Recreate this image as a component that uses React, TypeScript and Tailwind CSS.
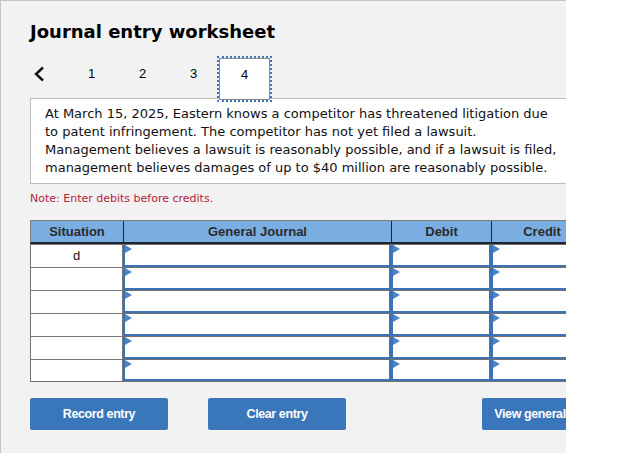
import React from "react";

const FONT_V = { fontFamily: '"DejaVu Sans", Verdana, sans-serif' };
const FONT_A = { fontFamily: '"Liberation Sans", Arial, sans-serif' };

function Tri() {
  return (
    <svg className="absolute left-0 top-0" width="7" height="8" viewBox="0 0 7 8">
      <polygon points="0,0 7,4 0,8" fill="#4a86c8" />
    </svg>
  );
}

function InputCell({ w }: { w: string }) {
  return (
    <div className={`${w} h-full border-t border-[#6f6f6f]`}>
      <div className="relative h-full border-2 border-t-0 border-[#3d73b5] bg-white">
        <Tri />
      </div>
    </div>
  );
}

export default function App() {
  const rows = ["d", "", "", "", "", ""];
  return (
    <div className="w-[640px] h-[456px] bg-white overflow-hidden">
      <div
        className="w-[566px] h-[453px] bg-[#f2f2f2] border-t border-l border-[#c4c4c4] overflow-hidden pt-[19px] pl-[29px]"
        style={FONT_V}
      >
        <div className="text-[18px] leading-[24px] font-bold text-black">Journal entry worksheet</div>

        <div className="relative z-10 mt-[14px] flex h-[40px] items-start">
          <div className="w-[36px] pt-[8px] pl-[3px]">
            <svg width="12" height="16" viewBox="0 0 12 16" className="block">
              <polyline points="10,1.5 3,8 10,14.5" fill="none" stroke="#111" strokeWidth="2.4" />
            </svg>
          </div>
          {["1", "2", "3"].map((n) => (
            <div key={n} className="w-[51px] pt-[8px] text-center text-[13px] leading-[15px] text-black" style={FONT_A}>
              {n}
            </div>
          ))}
          <div
            className="w-[51px] h-[42px] shrink-0 pt-[8px] text-center bg-white border border-[#8a8a8a] outline-2 outline-dotted outline-[#3a76c4] text-[13px] leading-[15px] text-black"
            style={FONT_A}
          >
            4
          </div>
        </div>

        <div className="w-[560px] border border-[#bdbdbd] bg-white pl-[14px] pt-[6px] pb-[6px] text-[13px] leading-[18px] text-[#111]">
          <div className="whitespace-nowrap">At March 15, 2025, Eastern knows a competitor has threatened litigation due</div>
          <div className="whitespace-nowrap">to patent infringement. The competitor has not yet filed a lawsuit.</div>
          <div className="whitespace-nowrap">Management believes a lawsuit is reasonably possible, and if a lawsuit is filed,</div>
          <div className="whitespace-nowrap">management believes damages of up to $40 million are reasonably possible.</div>
        </div>

        <div className="mt-[8px] text-[11px] leading-[14px] text-[#b4233c]">Note: Enter debits before credits.</div>

        <div className="mt-[14px] w-[562px]" style={FONT_A}>
          <div className="flex h-[24px] bg-[#7aade2] border-t border-l border-[#7d7d7d] border-b-2 border-b-[#1d2630] text-[13px] font-bold text-[#2b2b2b]">
            <div className="w-[93px] flex items-center justify-center border-r border-[#222]">Situation</div>
            <div className="w-[268px] flex items-center justify-center border-r border-[#222]">General Journal</div>
            <div className="w-[100px] flex items-center justify-center border-r border-[#222]">Debit</div>
            <div className="flex-1 flex items-center justify-center">Credit</div>
          </div>
          {rows.map((s, i) => (
            <div key={i} className={`flex h-[23px] ${i === 5 ? "border-b border-[#6f6f6f]" : ""}`}>
              <div className="w-[93px] h-full flex items-center justify-center bg-white border-l border-r border-[#777] border-t text-[13px] text-[#111]">
                {s}
              </div>
              <InputCell w="w-[268px]" />
              <InputCell w="w-[100px]" />
              <InputCell w="flex-1" />
            </div>
          ))}
        </div>

        <div className="mt-[16px] flex" style={FONT_A}>
          <button className="shrink-0 w-[138px] h-[32px] rounded-[2px] bg-[#3a76ba] text-white text-[12.5px] font-bold tracking-[-0.4px]">
            Record entry
          </button>
          <button className="shrink-0 ml-[40px] w-[138px] h-[32px] rounded-[2px] bg-[#3a76ba] text-white text-[12.5px] font-bold tracking-[-0.4px]">
            Clear entry
          </button>
          <button className="shrink-0 ml-[136px] w-[138px] h-[32px] rounded-[2px] bg-[#3a76ba] text-white text-[12.5px] font-bold tracking-[-0.4px]">
            View general journal
          </button>
        </div>
      </div>
    </div>
  );
}
